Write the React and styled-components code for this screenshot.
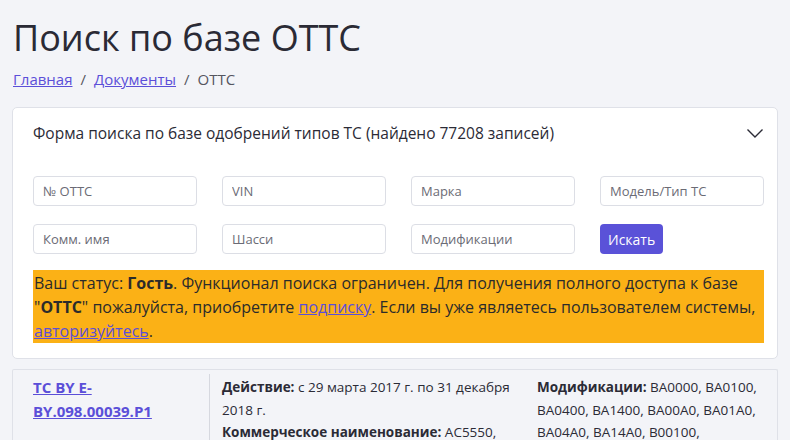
import styled, { createGlobalStyle } from "styled-components";

const GlobalStyle = createGlobalStyle`
  html, body {
    margin: 0;
    padding: 0;
    background: #f3f4f8;
  }
  body {
    font-family: "Open Sans", "Noto Sans", sans-serif;
    color: #2b2b36;
  }
`;

const Page = styled.div`
  padding: 0 12px;
  width: 766px;
`;

const Title = styled.h1`
  margin: 0;
  padding: 14px 0 0 1px;
  font-weight: 400;
  font-size: 36px;
  line-height: 48px;
  color: #2a2a35;
`;

const Crumbs = styled.nav`
  display: flex;
  gap: 8px;
  padding: 6px 0 0 1px;
  font-size: 15px;
  line-height: 22px;
  color: #55555f;
`;

const CrumbLink = styled.a`
  color: #5b4fd8;
  text-decoration: underline;
`;

const Card = styled.section`
  margin-top: 17px;
  background: #fff;
  border: 1px solid #dfe1e8;
  border-radius: 5px;
  padding: 13px 13px 15px 20px;
`;

const CardHead = styled.div`
  display: flex;
  justify-content: space-between;
  align-items: center;
  font-size: 15.5px;
  line-height: 24px;
`;

const Chevron = styled.svg`
  width: 18px;
  height: 18px;
`;

const Grid = styled.div`
  display: grid;
  grid-template-columns: repeat(4, 164px);
  column-gap: 25px;
  row-gap: 18px;
  margin-top: 31px;
`;

const Field = styled.input`
  box-sizing: border-box;
  height: 30px;
  width: 164px;
  border: 1px solid #dcdee5;
  border-radius: 4px;
  padding: 0 9px;
  font-family: inherit;
  font-size: 13px;
  color: #333;
  &::placeholder {
    color: #6b6b75;
  }
`;

const Button = styled.button`
  justify-self: start;
  height: 30px;
  padding: 0 8px;
  border: 0;
  border-radius: 4px;
  background: #5a52d8;
  color: #fff;
  font-family: inherit;
  font-size: 14px;
`;

const Alert = styled.div`
  margin-top: 16px;
  background: #fbb116;
  padding: 1px 0 0 1px;
  font-size: 16px;
  line-height: 24px;
  color: #2b2b2b;
`;

const Item = styled.article`
  margin-top: 10px;
  background: #f3f4f8;
  border: 1px solid #dfe1e8;
  border-bottom: 0;
  border-radius: 2px;
  padding: 4px 0 0 20px;
  display: grid;
  grid-template-columns: 176px 328px 240px;
  font-size: 13.5px;
  line-height: 22.5px;
`;

const DocLink = styled.a`
  color: #5b4fd8;
  font-size: 15px;
  line-height: 24px;
  font-weight: 700;
  text-decoration: underline;
  display: block;
  padding: 1px 20px 0 0;
`;

const Col = styled.div`
  border-left: ${(p) => (p.$divided ? "1px solid #d6d8df" : "none")};
  padding: 2px 12px 0 ${(p) => (p.$divided ? "12px" : "0")};
`;

export default function App() {
  return (
    <>
      <GlobalStyle />
      <Page>
        <Title>Поиск по базе ОТТС</Title>
        <Crumbs>
          <CrumbLink href="#">Главная</CrumbLink>
          <span>/</span>
          <CrumbLink href="#">Документы</CrumbLink>
          <span>/</span>
          <span>ОТТС</span>
        </Crumbs>
        <Card>
          <CardHead>
            <span>Форма поиска по базе одобрений типов ТС (найдено 77208 записей)</span>
            <Chevron viewBox="0 0 18 18" fill="none" stroke="#2b2b36" strokeWidth="1.4">
              <path d="M1.5 5.5 L9 13 L16.5 5.5" />
            </Chevron>
          </CardHead>
          <Grid>
            <Field placeholder="№ ОТТС" />
            <Field placeholder="VIN" />
            <Field placeholder="Марка" />
            <Field placeholder="Модель/Тип ТС" />
            <Field placeholder="Комм. имя" />
            <Field placeholder="Шасси" />
            <Field placeholder="Модификации" />
            <Button>Искать</Button>
          </Grid>
          <Alert>
            Ваш статус: <b>Гость</b>. Функционал поиска ограничен. Для получения полного доступа к базе "<b>ОТТС</b>"
            пожалуйста, приобретите <CrumbLink href="#">подписку</CrumbLink>. Если вы уже являетесь пользователем
            системы, <CrumbLink href="#">авторизуйтесь</CrumbLink>.
          </Alert>
        </Card>
        <Item>
          <DocLink href="#">ТС BY E-BY.098.00039.P1</DocLink>
          <Col $divided>
            <b>Действие:</b> с 29 марта 2017 г. по 31 декабря 2018 г.
            <br />
            <b>Коммерческое наименование:</b> AC5550, AC5551
          </Col>
          <Col>
            <b>Модификации:</b> BA0000, BA0100, BA0400, BA1400, BA00A0, BA01A0, BA04A0, BA14A0, B00100,
            BA0000M, BA0100M
          </Col>
        </Item>
      </Page>
    </>
  );
}
